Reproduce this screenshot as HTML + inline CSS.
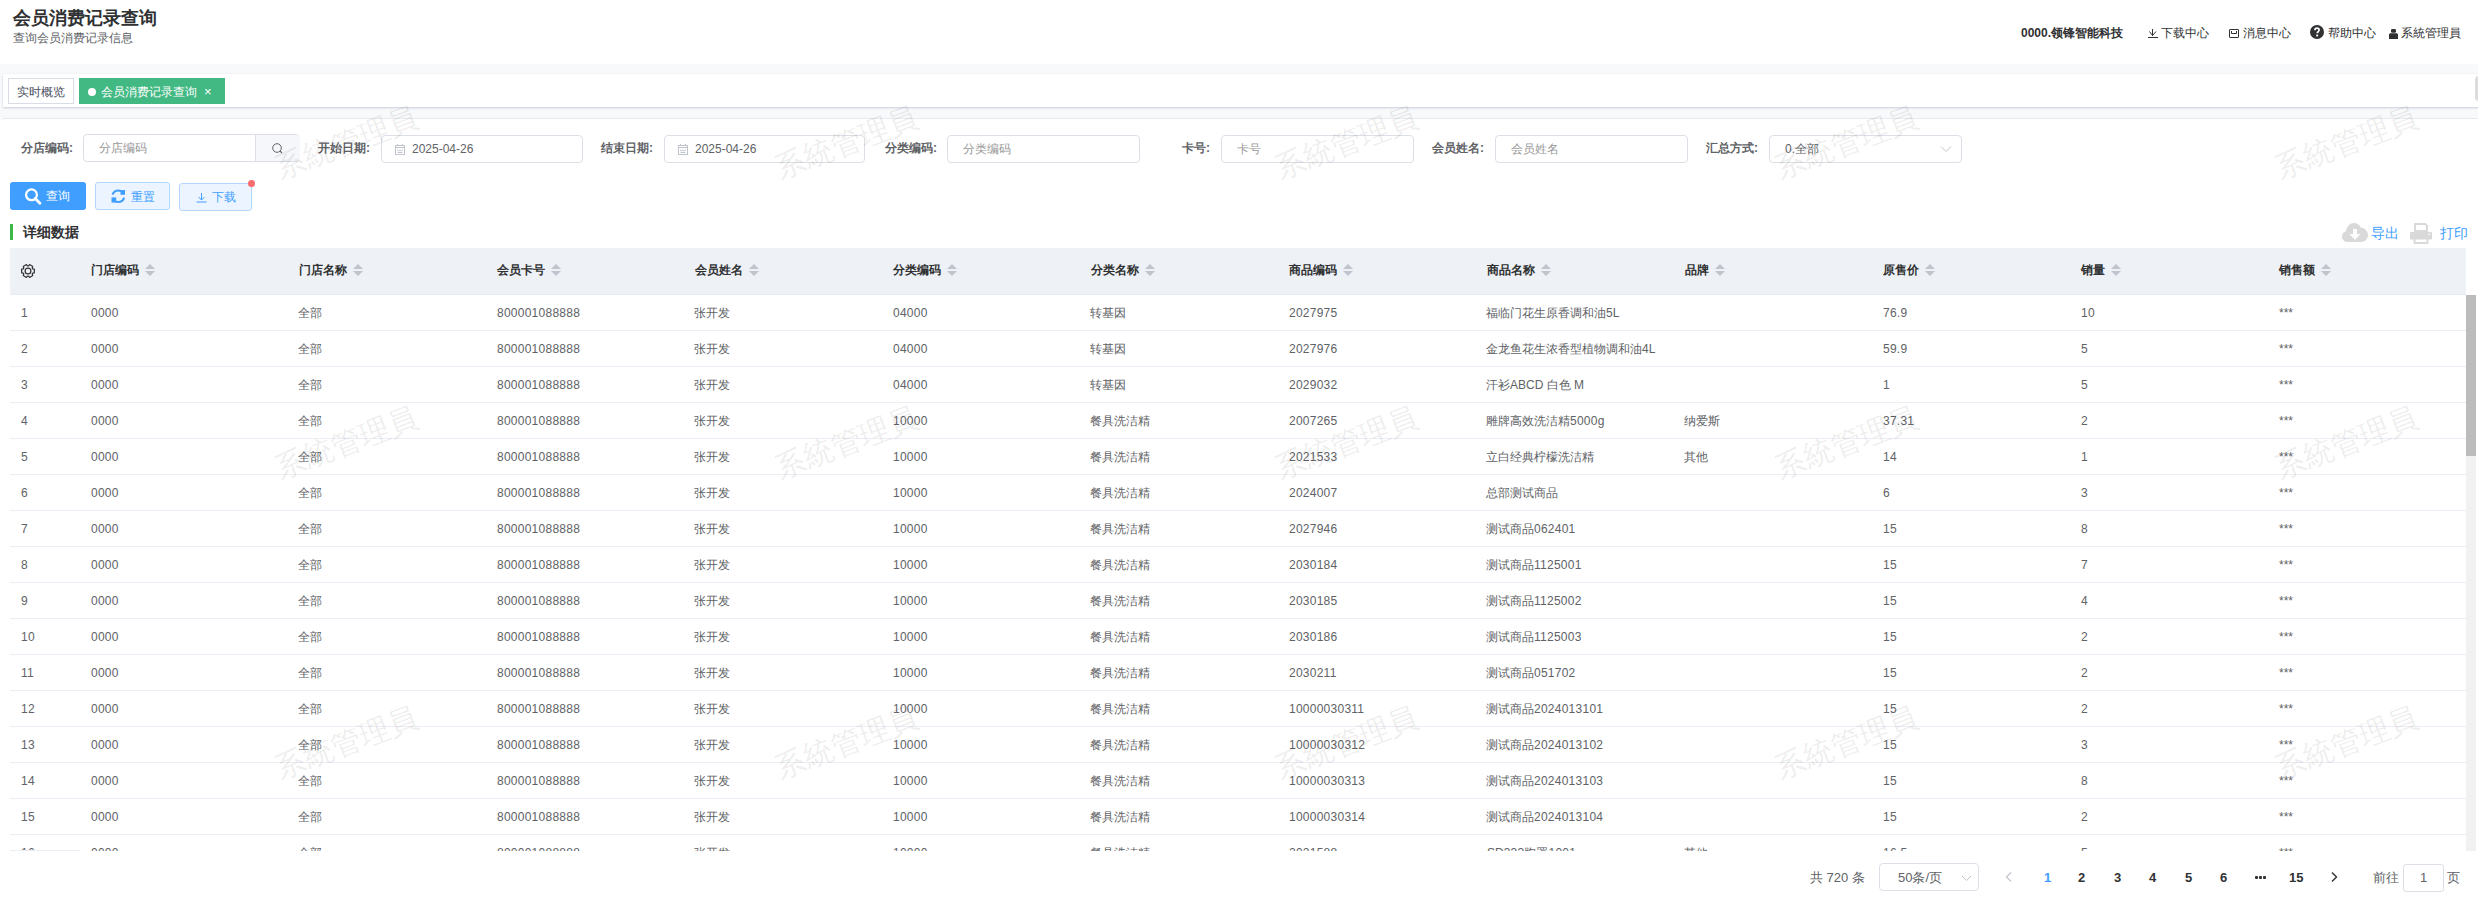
<!DOCTYPE html>
<html><head><meta charset="utf-8">
<style>
*{box-sizing:border-box;margin:0;padding:0}
html,body{width:2478px;height:900px;overflow:hidden;background:#fff;font-family:"Liberation Sans",sans-serif;font-size:12px;color:#606266}
.abs{position:absolute}
svg{display:block}
.t{position:absolute;white-space:nowrap;line-height:16px;height:16px}
#title{left:13px;top:8px;font-size:18px;font-weight:bold;color:#303133;line-height:20px}
#sub{left:13px;top:30px;font-size:12px;color:#606266}
.hdr{top:25px;color:#303133}
#band{left:0;top:64px;width:2478px;height:54px;background:#f8f9fb}
#tabs{left:3px;top:74px;width:2490px;height:33px;background:#fff;box-shadow:0 1px 2px 0 rgba(30,50,90,.2),0 0 3px 0 rgba(0,0,0,.04)}
#tabknob{left:2475px;top:76px;width:10px;height:25px;border-radius:4px;background:#dcdcdc}
.tag{position:absolute;top:78px;height:26px;line-height:26px;border:1px solid #d8dce5;color:#495060;background:#fff;font-size:12px;padding:0 8px;white-space:nowrap}
.tag.act{background:#42b983;border-color:#42b983;color:#fff}
#panel{left:1px;top:118px;width:2477px;height:782px;background:#fff;border-top:1px solid #e6e9f0;border-radius:3px 0 0 0}
.lbl{position:absolute;top:140px;font-weight:bold;color:#606266;line-height:16px;white-space:nowrap}
.inp{position:absolute;top:135px;height:28px;border:1px solid #dcdfe6;border-radius:4px;background:#fff}
.ph{position:absolute;top:5px;line-height:16px;color:#999;white-space:nowrap}
.val{position:absolute;top:5px;line-height:16px;color:#606266;white-space:nowrap}
.btn{position:absolute;top:182px;height:28px;border-radius:3px;white-space:nowrap}
.btn span{position:absolute;top:6px;line-height:16px}
.btn svg{position:absolute}
#sect{left:10px;top:224px;width:3px;height:16px;background:#3cb94a}
#secttxt{left:23px;top:223px;font-size:14px;font-weight:bold;color:#303133;line-height:18px}
.tool{position:absolute;top:224px;font-size:14px;color:#409eff;line-height:18px;white-space:nowrap}
#thead{position:absolute;left:10px;top:248px;width:2456px;height:47px;background:#eef1f6;border-bottom:1px solid #e8ebf4}
.th{position:absolute;top:262px;line-height:16px;font-weight:bold;color:#303133;white-space:nowrap}
.caret{position:absolute;right:-16px;top:2px;width:10px;height:12px}
.caret b{position:absolute;left:0;width:0;height:0;border:5px solid transparent}
.caret .up{top:-5px;border-bottom-color:#c0c4cc}
.caret .dn{top:7px;border-top-color:#c0c4cc}
#tbody{position:absolute;left:0;top:0;width:2478px;height:851px;overflow:hidden;clip-path:inset(295px 0 0 0)}
.tr{position:absolute;left:10px;width:2456px;height:36px;border-bottom:1px solid #ebeef5}
.td{position:absolute;top:10px;line-height:16px;white-space:nowrap;color:#606266}
.n{letter-spacing:.25px}
.tr .td:first-child{left:11px!important}
#fixline{position:absolute;left:10px;top:850px;width:70px;height:1px;background:#ebeef5}
#sbtrack{position:absolute;left:2466px;top:295px;width:10px;height:556px;background:#f1f1f1}
#sbthumb{position:absolute;left:0;top:0;width:10px;height:161px;background:#bcbcbc}
.pg{position:absolute;top:869px;line-height:17px;font-size:13px;white-space:nowrap}
.wm{position:absolute;font-size:30px;color:rgba(0,0,0,.085);transform:rotate(-21deg);white-space:nowrap;line-height:30px;pointer-events:none;z-index:50;font-family:"Liberation Sans",sans-serif}

</style></head><body>
<div class="abs" id="title">会员消费记录查询</div>
<div class="t" id="sub">查询会员消费记录信息</div>

<div class="t hdr" style="left:2021px;font-weight:bold">0000.领锋智能科技</div>
<svg class="abs" style="left:2148px;top:29px" width="11" height="10" viewBox="0 0 11 10"><path d="M4.5 0v7M1.5 2.5l3 4 3.5-4M0 8.5h10" fill="none" stroke="#303133" stroke-width="1"/></svg>
<div class="t hdr" style="left:2161px">下载中心</div>
<svg class="abs" style="left:2229px;top:29px" width="10" height="9" viewBox="0 0 10 9"><rect x="0.5" y="0.5" width="9" height="8" rx="0.5" fill="none" stroke="#303133"/><path d="M2.5 2v2.5h5V2" fill="none" stroke="#303133"/></svg>
<div class="t hdr" style="left:2243px">消息中心</div>
<svg class="abs" style="left:2310px;top:25px" width="14" height="14" viewBox="0 0 14 14"><circle cx="7" cy="7" r="7" fill="#303133"/><path d="M4.9 5.3c0-1.3 0.9-2.1 2.1-2.1s2.1 0.8 2.1 1.9c0 1.5-1.8 1.5-1.8 3.1" fill="none" stroke="#fff" stroke-width="1.7"/><rect x="6.2" y="9.6" width="1.9" height="1.8" fill="#fff"/></svg>
<div class="t hdr" style="left:2328px">帮助中心</div>
<svg class="abs" style="left:2389px;top:29px" width="9" height="10" viewBox="0 0 9 10"><rect x="2" y="0" width="5" height="3.8" rx="1.3" fill="#303133"/><path d="M0 10V5.8C0 4.8 0.8 4.3 1.6 4.3h5.8C8.2 4.3 9 4.8 9 5.8V10z" fill="#303133"/></svg>
<div class="t hdr" style="left:2401px">系統管理員</div>

<div class="abs" id="band"></div>
<div class="abs" id="tabs"></div>
<div class="abs" id="tabknob"></div>
<div class="tag" style="left:8px;width:66px">实时概览</div>
<div class="tag act" style="left:79px;width:146px"><span style="display:inline-block;width:8px;height:8px;border-radius:50%;background:#fff;margin-right:5px;vertical-align:0px"></span>会员消费记录查询<span style="font-size:13px;margin-left:7px">×</span></div>

<div class="abs" id="panel"></div>

<div class="lbl" style="left:21px">分店编码:</div>
<div class="inp" style="left:83px;width:217px;top:134px">
  <div class="ph" style="left:15px">分店编码</div>
  <div class="abs" style="left:171px;top:0;width:45px;height:26px;background:#f5f7fa;border-left:1px solid #dcdfe6;border-radius:0 4px 4px 0"></div>
  <svg class="abs" style="left:188px;top:8px" width="11" height="11" viewBox="0 0 11 11"><circle cx="5" cy="5" r="4.3" fill="none" stroke="#606266" stroke-width="1"/><path d="M8 8l2 2" stroke="#606266" stroke-width="1.1"/></svg>
</div>
<div class="lbl" style="left:318px">开始日期:</div>
<div class="inp" style="left:381px;width:202px">
  <svg class="abs" style="left:13px;top:8px" width="10" height="11" viewBox="0 0 10 11"><rect x="0.5" y="1.5" width="9" height="9" fill="none" stroke="#c0c4cc"/><path d="M0.5 3.5h9M2.5 0v2M7.5 0v2M2 6l1.5 1 1.5-1 1.5 1 1.5-1M2.5 8.5h5" fill="none" stroke="#c0c4cc"/></svg>
  <div class="val" style="left:30px">2025-04-26</div>
</div>
<div class="lbl" style="left:601px">结束日期:</div>
<div class="inp" style="left:664px;width:201px">
  <svg class="abs" style="left:13px;top:8px" width="10" height="11" viewBox="0 0 10 11"><rect x="0.5" y="1.5" width="9" height="9" fill="none" stroke="#c0c4cc"/><path d="M0.5 3.5h9M2.5 0v2M7.5 0v2M2 6l1.5 1 1.5-1 1.5 1 1.5-1M2.5 8.5h5" fill="none" stroke="#c0c4cc"/></svg>
  <div class="val" style="left:30px">2025-04-26</div>
</div>
<div class="lbl" style="left:885px">分类编码:</div>
<div class="inp" style="left:947px;width:193px"><div class="ph" style="left:15px">分类编码</div></div>
<div class="lbl" style="left:1182px">卡号:</div>
<div class="inp" style="left:1221px;width:193px"><div class="ph" style="left:15px">卡号</div></div>
<div class="lbl" style="left:1432px">会员姓名:</div>
<div class="inp" style="left:1495px;width:193px"><div class="ph" style="left:15px">会员姓名</div></div>
<div class="lbl" style="left:1706px">汇总方式:</div>
<div class="inp" style="left:1769px;width:193px">
  <div class="val" style="left:15px">0.全部</div>
  <svg class="abs" style="left:170px;top:9px" width="12" height="8" viewBox="0 0 12 8"><path d="M1 1.5l5 5 5-5" fill="none" stroke="#c0c4cc" stroke-width="1"/></svg>
</div>

<div class="btn" style="left:10px;width:76px;background:#409eff;color:#fff">
  <svg style="left:15px;top:6px" width="17" height="17" viewBox="0 0 17 17"><circle cx="6.5" cy="6.8" r="5.4" fill="none" stroke="#fff" stroke-width="2.3"/><path d="M10.3 10.6l4.6 4.6" stroke="#fff" stroke-width="2.8" stroke-linecap="round"/></svg>
  <span style="left:36px">查询</span>
</div>
<div class="btn" style="left:95px;width:75px;background:#ecf5ff;border:1px solid #b3d8ff;color:#409eff">
  <svg style="left:15px;top:6px" width="15" height="15" viewBox="0 0 15 15"><path d="M1.5 5.6C2.4 3 4.6 1.4 7.3 1.4c1.8 0 3.3 0.7 4.4 1.9" fill="none" stroke="#409eff" stroke-width="2"/><path d="M9.5 1h4.5v4.8H9.5z" fill="#409eff"/><path d="M13.2 8.6c-0.8 2.7-3.1 4.4-5.9 4.4-1.8 0-3.3-0.7-4.4-1.9" fill="none" stroke="#409eff" stroke-width="2"/><path d="M0.5 8.4h4.7v5.2H0.5z" fill="#409eff"/></svg>
  <span style="left:35px">重置</span>
</div>
<div class="btn" style="left:179px;top:183px;width:73px;background:#ecf5ff;border:1px solid #b3d8ff;color:#409eff">
  <svg style="left:16px;top:9px" width="11" height="10" viewBox="0 0 11 10"><path d="M5.5 0v7M2.5 4l3 3 3-3M0.5 9h10" fill="none" stroke="#409eff" stroke-width="1"/></svg>
  <span style="left:32px;top:5px">下载</span>
</div>
<div class="abs" style="left:248px;top:180px;width:7px;height:7px;border-radius:50%;background:#f56c6c"></div>

<div class="abs" id="sect"></div>
<div class="abs" id="secttxt">详细数据</div>
<svg class="abs" style="left:2342px;top:223px" width="26" height="19" viewBox="0 0 26 19"><path d="M6 19C2.5 19 0 16.6 0 13.4c0-2.6 1.7-4.6 4-5.2C4.6 3.4 8.2 0 12 0c3 0 5.6 1.8 6.7 4.4C22.6 4.8 26 8 26 12c0 3.9-3 7-7 7z" fill="#d9d9d9"/><path d="M11 6h4v5h3.5L13 17 7.5 11H11z" fill="#fff"/></svg>
<div class="tool" style="left:2371px">导出</div>
<svg class="abs" style="left:2410px;top:223px" width="22" height="21" viewBox="0 0 22 21"><path d="M4 1.2c0-0.7 0.5-1.2 1.2-1.2h10.3L18 2.5V9H4z M6 2v5h10V3.2L14.8 2z" fill="#d9d9d9" fill-rule="evenodd"/><rect x="0" y="9" width="22" height="7.5" rx="1" fill="#d9d9d9"/><path d="M3.5 14h15v5.8c0 0.7-0.5 1.2-1.2 1.2H4.7c-0.7 0-1.2-0.5-1.2-1.2z M5.5 16v3h11v-3z" fill="#d9d9d9" fill-rule="evenodd"/><circle cx="19.3" cy="11.3" r="0.9" fill="#fff"/></svg>
<div class="tool" style="left:2440px">打印</div>

<div id="thead"></div>
<div class="abs gear" style="left:21px;top:264px"><svg width="14" height="14" viewBox="0 0 14 14"><path d="M11.75 4.88 L13.34 5.18 L13.34 8.82 L11.75 9.12 L11.21 10.06 L11.75 11.58 L8.60 13.40 L7.54 12.17 L6.46 12.17 L5.40 13.40 L2.25 11.58 L2.79 10.06 L2.25 9.12 L0.66 8.82 L0.66 5.18 L2.25 4.88 L2.79 3.94 L2.25 2.42 L5.40 0.60 L6.46 1.83 L7.54 1.83 L8.60 0.60 L11.75 2.42 L11.21 3.94Z" fill="none" stroke="#303133" stroke-width="1.2" stroke-linejoin="round"/><circle cx="7" cy="7" r="2.9" fill="none" stroke="#303133" stroke-width="1.2"/></svg></div>
<div class="th" style="left:91px">门店编码<i class="caret"><b class="up"></b><b class="dn"></b></i></div>
<div class="th" style="left:299px">门店名称<i class="caret"><b class="up"></b><b class="dn"></b></i></div>
<div class="th" style="left:497px">会员卡号<i class="caret"><b class="up"></b><b class="dn"></b></i></div>
<div class="th" style="left:695px">会员姓名<i class="caret"><b class="up"></b><b class="dn"></b></i></div>
<div class="th" style="left:893px">分类编码<i class="caret"><b class="up"></b><b class="dn"></b></i></div>
<div class="th" style="left:1091px">分类名称<i class="caret"><b class="up"></b><b class="dn"></b></i></div>
<div class="th" style="left:1289px">商品编码<i class="caret"><b class="up"></b><b class="dn"></b></i></div>
<div class="th" style="left:1487px">商品名称<i class="caret"><b class="up"></b><b class="dn"></b></i></div>
<div class="th" style="left:1685px">品牌<i class="caret"><b class="up"></b><b class="dn"></b></i></div>
<div class="th" style="left:1883px">原售价<i class="caret"><b class="up"></b><b class="dn"></b></i></div>
<div class="th" style="left:2081px">销量<i class="caret"><b class="up"></b><b class="dn"></b></i></div>
<div class="th" style="left:2279px">销售额<i class="caret"><b class="up"></b><b class="dn"></b></i></div>
<div id="tbody"><div class="tr" style="top:295px"><div class="td" style="left:21px"><span class="n">1</span></div><div class="td" style="left:81px"><span class="n">0000</span></div><div class="td" style="left:288px">全部</div><div class="td" style="left:487px"><span class="n">800001088888</span></div><div class="td" style="left:684px">张开发</div><div class="td" style="left:883px"><span class="n">04000</span></div><div class="td" style="left:1080px">转基因</div><div class="td" style="left:1279px"><span class="n">2027975</span></div><div class="td" style="left:1476px">福临门花生原香调和油5L</div><div class="td" style="left:1873px"><span class="n">76.9</span></div><div class="td" style="left:2071px"><span class="n">10</span></div><div class="td star" style="left:2269px">***</div></div><div class="tr" style="top:331px"><div class="td" style="left:21px"><span class="n">2</span></div><div class="td" style="left:81px"><span class="n">0000</span></div><div class="td" style="left:288px">全部</div><div class="td" style="left:487px"><span class="n">800001088888</span></div><div class="td" style="left:684px">张开发</div><div class="td" style="left:883px"><span class="n">04000</span></div><div class="td" style="left:1080px">转基因</div><div class="td" style="left:1279px"><span class="n">2027976</span></div><div class="td" style="left:1476px">金龙鱼花生浓香型植物调和油4L</div><div class="td" style="left:1873px"><span class="n">59.9</span></div><div class="td" style="left:2071px">5</div><div class="td star" style="left:2269px">***</div></div><div class="tr" style="top:367px"><div class="td" style="left:21px"><span class="n">3</span></div><div class="td" style="left:81px"><span class="n">0000</span></div><div class="td" style="left:288px">全部</div><div class="td" style="left:487px"><span class="n">800001088888</span></div><div class="td" style="left:684px">张开发</div><div class="td" style="left:883px"><span class="n">04000</span></div><div class="td" style="left:1080px">转基因</div><div class="td" style="left:1279px"><span class="n">2029032</span></div><div class="td" style="left:1476px">汗衫ABCD 白色 M</div><div class="td" style="left:1873px">1</div><div class="td" style="left:2071px">5</div><div class="td star" style="left:2269px">***</div></div><div class="tr" style="top:403px"><div class="td" style="left:21px"><span class="n">4</span></div><div class="td" style="left:81px"><span class="n">0000</span></div><div class="td" style="left:288px">全部</div><div class="td" style="left:487px"><span class="n">800001088888</span></div><div class="td" style="left:684px">张开发</div><div class="td" style="left:883px"><span class="n">10000</span></div><div class="td" style="left:1080px">餐具洗洁精</div><div class="td" style="left:1279px"><span class="n">2007265</span></div><div class="td" style="left:1476px">雕牌高效洗洁精<span class="n">5000</span>g</div><div class="td" style="left:1674px">纳爱斯</div><div class="td" style="left:1873px"><span class="n">37.31</span></div><div class="td" style="left:2071px">2</div><div class="td star" style="left:2269px">***</div></div><div class="tr" style="top:439px"><div class="td" style="left:21px"><span class="n">5</span></div><div class="td" style="left:81px"><span class="n">0000</span></div><div class="td" style="left:288px">全部</div><div class="td" style="left:487px"><span class="n">800001088888</span></div><div class="td" style="left:684px">张开发</div><div class="td" style="left:883px"><span class="n">10000</span></div><div class="td" style="left:1080px">餐具洗洁精</div><div class="td" style="left:1279px"><span class="n">2021533</span></div><div class="td" style="left:1476px">立白经典柠檬洗洁精</div><div class="td" style="left:1674px">其他</div><div class="td" style="left:1873px"><span class="n">14</span></div><div class="td" style="left:2071px">1</div><div class="td star" style="left:2269px">***</div></div><div class="tr" style="top:475px"><div class="td" style="left:21px"><span class="n">6</span></div><div class="td" style="left:81px"><span class="n">0000</span></div><div class="td" style="left:288px">全部</div><div class="td" style="left:487px"><span class="n">800001088888</span></div><div class="td" style="left:684px">张开发</div><div class="td" style="left:883px"><span class="n">10000</span></div><div class="td" style="left:1080px">餐具洗洁精</div><div class="td" style="left:1279px"><span class="n">2024007</span></div><div class="td" style="left:1476px">总部测试商品</div><div class="td" style="left:1873px">6</div><div class="td" style="left:2071px">3</div><div class="td star" style="left:2269px">***</div></div><div class="tr" style="top:511px"><div class="td" style="left:21px"><span class="n">7</span></div><div class="td" style="left:81px"><span class="n">0000</span></div><div class="td" style="left:288px">全部</div><div class="td" style="left:487px"><span class="n">800001088888</span></div><div class="td" style="left:684px">张开发</div><div class="td" style="left:883px"><span class="n">10000</span></div><div class="td" style="left:1080px">餐具洗洁精</div><div class="td" style="left:1279px"><span class="n">2027946</span></div><div class="td" style="left:1476px">测试商品<span class="n">062401</span></div><div class="td" style="left:1873px"><span class="n">15</span></div><div class="td" style="left:2071px">8</div><div class="td star" style="left:2269px">***</div></div><div class="tr" style="top:547px"><div class="td" style="left:21px"><span class="n">8</span></div><div class="td" style="left:81px"><span class="n">0000</span></div><div class="td" style="left:288px">全部</div><div class="td" style="left:487px"><span class="n">800001088888</span></div><div class="td" style="left:684px">张开发</div><div class="td" style="left:883px"><span class="n">10000</span></div><div class="td" style="left:1080px">餐具洗洁精</div><div class="td" style="left:1279px"><span class="n">2030184</span></div><div class="td" style="left:1476px">测试商品<span class="n">1125001</span></div><div class="td" style="left:1873px"><span class="n">15</span></div><div class="td" style="left:2071px">7</div><div class="td star" style="left:2269px">***</div></div><div class="tr" style="top:583px"><div class="td" style="left:21px"><span class="n">9</span></div><div class="td" style="left:81px"><span class="n">0000</span></div><div class="td" style="left:288px">全部</div><div class="td" style="left:487px"><span class="n">800001088888</span></div><div class="td" style="left:684px">张开发</div><div class="td" style="left:883px"><span class="n">10000</span></div><div class="td" style="left:1080px">餐具洗洁精</div><div class="td" style="left:1279px"><span class="n">2030185</span></div><div class="td" style="left:1476px">测试商品<span class="n">1125002</span></div><div class="td" style="left:1873px"><span class="n">15</span></div><div class="td" style="left:2071px">4</div><div class="td star" style="left:2269px">***</div></div><div class="tr" style="top:619px"><div class="td" style="left:21px"><span class="n">10</span></div><div class="td" style="left:81px"><span class="n">0000</span></div><div class="td" style="left:288px">全部</div><div class="td" style="left:487px"><span class="n">800001088888</span></div><div class="td" style="left:684px">张开发</div><div class="td" style="left:883px"><span class="n">10000</span></div><div class="td" style="left:1080px">餐具洗洁精</div><div class="td" style="left:1279px"><span class="n">2030186</span></div><div class="td" style="left:1476px">测试商品<span class="n">1125003</span></div><div class="td" style="left:1873px"><span class="n">15</span></div><div class="td" style="left:2071px">2</div><div class="td star" style="left:2269px">***</div></div><div class="tr" style="top:655px"><div class="td" style="left:21px"><span class="n">11</span></div><div class="td" style="left:81px"><span class="n">0000</span></div><div class="td" style="left:288px">全部</div><div class="td" style="left:487px"><span class="n">800001088888</span></div><div class="td" style="left:684px">张开发</div><div class="td" style="left:883px"><span class="n">10000</span></div><div class="td" style="left:1080px">餐具洗洁精</div><div class="td" style="left:1279px"><span class="n">2030211</span></div><div class="td" style="left:1476px">测试商品<span class="n">051702</span></div><div class="td" style="left:1873px"><span class="n">15</span></div><div class="td" style="left:2071px">2</div><div class="td star" style="left:2269px">***</div></div><div class="tr" style="top:691px"><div class="td" style="left:21px"><span class="n">12</span></div><div class="td" style="left:81px"><span class="n">0000</span></div><div class="td" style="left:288px">全部</div><div class="td" style="left:487px"><span class="n">800001088888</span></div><div class="td" style="left:684px">张开发</div><div class="td" style="left:883px"><span class="n">10000</span></div><div class="td" style="left:1080px">餐具洗洁精</div><div class="td" style="left:1279px"><span class="n">10000030311</span></div><div class="td" style="left:1476px">测试商品<span class="n">2024013101</span></div><div class="td" style="left:1873px"><span class="n">15</span></div><div class="td" style="left:2071px">2</div><div class="td star" style="left:2269px">***</div></div><div class="tr" style="top:727px"><div class="td" style="left:21px"><span class="n">13</span></div><div class="td" style="left:81px"><span class="n">0000</span></div><div class="td" style="left:288px">全部</div><div class="td" style="left:487px"><span class="n">800001088888</span></div><div class="td" style="left:684px">张开发</div><div class="td" style="left:883px"><span class="n">10000</span></div><div class="td" style="left:1080px">餐具洗洁精</div><div class="td" style="left:1279px"><span class="n">10000030312</span></div><div class="td" style="left:1476px">测试商品<span class="n">2024013102</span></div><div class="td" style="left:1873px"><span class="n">15</span></div><div class="td" style="left:2071px">3</div><div class="td star" style="left:2269px">***</div></div><div class="tr" style="top:763px"><div class="td" style="left:21px"><span class="n">14</span></div><div class="td" style="left:81px"><span class="n">0000</span></div><div class="td" style="left:288px">全部</div><div class="td" style="left:487px"><span class="n">800001088888</span></div><div class="td" style="left:684px">张开发</div><div class="td" style="left:883px"><span class="n">10000</span></div><div class="td" style="left:1080px">餐具洗洁精</div><div class="td" style="left:1279px"><span class="n">10000030313</span></div><div class="td" style="left:1476px">测试商品<span class="n">2024013103</span></div><div class="td" style="left:1873px"><span class="n">15</span></div><div class="td" style="left:2071px">8</div><div class="td star" style="left:2269px">***</div></div><div class="tr" style="top:799px"><div class="td" style="left:21px"><span class="n">15</span></div><div class="td" style="left:81px"><span class="n">0000</span></div><div class="td" style="left:288px">全部</div><div class="td" style="left:487px"><span class="n">800001088888</span></div><div class="td" style="left:684px">张开发</div><div class="td" style="left:883px"><span class="n">10000</span></div><div class="td" style="left:1080px">餐具洗洁精</div><div class="td" style="left:1279px"><span class="n">10000030314</span></div><div class="td" style="left:1476px">测试商品<span class="n">2024013104</span></div><div class="td" style="left:1873px"><span class="n">15</span></div><div class="td" style="left:2071px">2</div><div class="td star" style="left:2269px">***</div></div><div class="tr" style="top:835px"><div class="td" style="left:21px"><span class="n">16</span></div><div class="td" style="left:81px"><span class="n">0000</span></div><div class="td" style="left:288px">全部</div><div class="td" style="left:487px"><span class="n">800001088888</span></div><div class="td" style="left:684px">张开发</div><div class="td" style="left:883px"><span class="n">10000</span></div><div class="td" style="left:1080px">餐具洗洁精</div><div class="td" style="left:1279px"><span class="n">2021588</span></div><div class="td" style="left:1477px">SD<span class="n">333</span>胸罩<span class="n">1001</span></div><div class="td" style="left:1674px">其他</div><div class="td" style="left:1873px"><span class="n">16.5</span></div><div class="td" style="left:2071px">5</div><div class="td star" style="left:2269px">***</div></div><div id="fixline"></div></div>
<div id="sbtrack"><div id="sbthumb"></div></div>
<div class="pg" style="left:1810px;color:#606266">共 720 条</div>
<div class="inp" style="left:1879px;top:863px;width:100px">
  <div class="val" style="left:18px;top:5px;font-size:13px;line-height:17px">50条/页</div>
  <svg class="abs" style="left:81px;top:11px" width="11" height="7" viewBox="0 0 11 7"><path d="M1 1l4.5 4.5L10 1" fill="none" stroke="#c0c4cc"/></svg>
</div>
<svg class="abs" style="left:2005px;top:872px" width="7" height="10" viewBox="0 0 7 10"><path d="M6 0.5L1.5 5 6 9.5" fill="none" stroke="#c0c4cc" stroke-width="1.1"/></svg>
<div class="pg" style="left:2044px;color:#409eff;font-weight:bold">1</div>
<div class="pg" style="left:2078px;color:#303133;font-weight:bold">2</div>
<div class="pg" style="left:2114px;color:#303133;font-weight:bold">3</div>
<div class="pg" style="left:2149px;color:#303133;font-weight:bold">4</div>
<div class="pg" style="left:2185px;color:#303133;font-weight:bold">5</div>
<div class="pg" style="left:2220px;color:#303133;font-weight:bold">6</div>
<div class="abs" style="left:2255px;top:876px;width:3px;height:3px;background:#303133;border-radius:1px"></div><div class="abs" style="left:2259px;top:876px;width:3px;height:3px;background:#303133;border-radius:1px"></div><div class="abs" style="left:2263px;top:876px;width:3px;height:3px;background:#303133;border-radius:1px"></div>
<div class="pg" style="left:2289px;color:#303133;font-weight:bold">15</div>
<svg class="abs" style="left:2331px;top:872px" width="7" height="10" viewBox="0 0 7 10"><path d="M1 0.5L5.5 5 1 9.5" fill="none" stroke="#303133" stroke-width="1.4"/></svg>
<div class="pg" style="left:2373px;color:#606266">前往</div>
<div class="inp" style="left:2403px;top:864px;width:41px;height:28px;border-radius:3px">
  <div class="val" style="left:16px;top:4px;font-size:13px;line-height:17px">1</div>
</div>
<div class="pg" style="left:2447px;color:#606266">页</div>

<div class="wm" style="left:271px;top:128px">系統管理員</div>
<div class="wm" style="left:771px;top:128px">系統管理員</div>
<div class="wm" style="left:1271px;top:128px">系統管理員</div>
<div class="wm" style="left:1771px;top:128px">系統管理員</div>
<div class="wm" style="left:2271px;top:128px">系統管理員</div>
<div class="wm" style="left:271px;top:428px">系統管理員</div>
<div class="wm" style="left:771px;top:428px">系統管理員</div>
<div class="wm" style="left:1271px;top:428px">系統管理員</div>
<div class="wm" style="left:1771px;top:428px">系統管理員</div>
<div class="wm" style="left:2271px;top:428px">系統管理員</div>
<div class="wm" style="left:271px;top:728px">系統管理員</div>
<div class="wm" style="left:771px;top:728px">系統管理員</div>
<div class="wm" style="left:1271px;top:728px">系統管理員</div>
<div class="wm" style="left:1771px;top:728px">系統管理員</div>
<div class="wm" style="left:2271px;top:728px">系統管理員</div>
</body></html>
